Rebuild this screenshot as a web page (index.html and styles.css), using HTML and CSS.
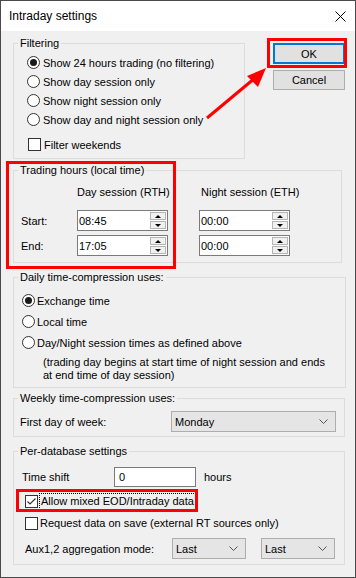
FILE: index.html
```html
<!DOCTYPE html>
<html lang="en">
<head>
  <meta charset="UTF-8">
  <meta name="viewport" content="width=device-width, initial-scale=1.0">
  <title>Intraday settings</title>
  <link rel="stylesheet" href="styles.css">
</head>
<body>
  <div class="window">

    <!-- Title bar -->
    <div class="titlebar">
      <span class="title">Intraday settings</span>
      <svg class="close" width="11" height="11" viewBox="0 0 11 11">
        <path d="M0.5 0.5L10.5 10.5M10.5 0.5L0.5 10.5" stroke="#000" stroke-width="1" fill="none"/>
      </svg>
    </div>

    <div class="dialog">

      <!-- Filtering + buttons -->
      <div class="top-row">
        <fieldset class="group filtering">
          <legend>Filtering</legend>
          <div class="group-body">
            <div class="opt"><span class="radio on"></span>Show 24 hours trading (no filtering)</div>
            <div class="opt"><span class="radio"></span>Show day session only</div>
            <div class="opt"><span class="radio"></span>Show night session only</div>
            <div class="opt"><span class="radio"></span>Show day and night session only</div>
            <div class="opt weekends"><span class="check"></span>Filter weekends</div>
          </div>
        </fieldset>
        <div class="buttons">
          <button class="btn default">OK</button>
          <button class="btn">Cancel</button>
        </div>
      </div>

      <!-- Trading hours -->
      <fieldset class="group trading">
        <legend>Trading hours (local time)</legend>
        <div class="hours-grid">
          <span></span>
          <span class="col-head">Day session (RTH)</span>
          <span class="col-head night-head">Night session (ETH)</span>

          <span class="row-label">Start:</span>
          <div class="spin"><span class="spin-value">08:45</span><span class="spin-btns"><i class="up"></i><i class="down"></i></span></div>
          <div class="spin"><span class="spin-value">00:00</span><span class="spin-btns"><i class="up"></i><i class="down"></i></span></div>

          <span class="row-label">End:</span>
          <div class="spin"><span class="spin-value">17:05</span><span class="spin-btns"><i class="up"></i><i class="down"></i></span></div>
          <div class="spin"><span class="spin-value">00:00</span><span class="spin-btns"><i class="up"></i><i class="down"></i></span></div>
        </div>
      </fieldset>

      <!-- Daily compression -->
      <fieldset class="group daily">
        <legend>Daily time-compression uses:</legend>
        <div class="group-body">
          <div class="opt tall"><span class="radio on"></span>Exchange time</div>
          <div class="opt tall"><span class="radio"></span>Local time</div>
          <div class="opt tall"><span class="radio"></span>Day/Night session times as defined above</div>
          <p class="note">(trading day begins at start time of night session and ends<br>at end time of day session)</p>
        </div>
      </fieldset>

      <!-- Weekly compression -->
      <fieldset class="group weekly">
        <legend>Weekly time-compression uses:</legend>
        <div class="group-body row">
          <span>First day of week:</span>
          <div class="combo wide">Monday<svg class="chev" width="9" height="5" viewBox="0 0 9 5"><path d="M0.5 0.5L4.5 4.5L8.5 0.5" stroke="#555" fill="none"/></svg></div>
        </div>
      </fieldset>

      <!-- Per-database -->
      <fieldset class="group perdb">
        <legend>Per-database settings</legend>
        <div class="group-body">
          <div class="row shift">
            <span class="shift-label">Time shift</span>
            <div class="edit">0</div>
            <span class="unit">hours</span>
          </div>
          <div class="opt chk mixed"><span class="check on"><svg width="11" height="11" viewBox="0 0 11 11"><path d="M1.5 5.5L4 8L9.5 2.5" stroke="#333" stroke-width="1.2" fill="none"/></svg></span><span class="focus">Allow mixed EOD/Intraday data</span></div>
          <div class="opt chk"><span class="check"></span>Request data on save (external RT sources only)</div>
          <div class="row aux">
            <span class="aux-label">Aux1,2 aggregation mode:</span>
            <div class="combo small">Last<svg class="chev" width="9" height="5" viewBox="0 0 9 5"><path d="M0.5 0.5L4.5 4.5L8.5 0.5" stroke="#555" fill="none"/></svg></div>
            <div class="combo small">Last<svg class="chev" width="9" height="5" viewBox="0 0 9 5"><path d="M0.5 0.5L4.5 4.5L8.5 0.5" stroke="#555" fill="none"/></svg></div>
          </div>
        </div>
      </fieldset>
    </div>

    <!-- Red annotations drawn over the dialog -->
    <div class="mark mark-ok"></div>
    <div class="mark mark-hours"></div>
    <div class="mark mark-mixed"></div>
    <svg class="arrow" width="354" height="576" viewBox="0 0 354 576">
      <path d="M206 117L254 77" stroke="#f00" stroke-width="3" fill="none"/>
      <path d="M265 67L246 75L257 86Z" fill="#f00"/>
    </svg>
  </div>
</body>
</html>
```

FILE: styles.css
```css
/* Basic styling */
* {
  box-sizing: border-box;
}
body {
  margin: 0;
  background: #ffffff;
  font-family: "Liberation Sans", Arial, sans-serif;
  font-size: 11px;
  color: #000000;
}
.window {
  position: relative;
  width: 356px;
  height: 578px;
  border: 1px solid #4a4a4a;
  background: #f0f0f0;
}

/* Title bar */
.titlebar {
  height: 30px;
  background: #ffffff;
  display: flex;
  align-items: center;
  justify-content: space-between;
  padding: 0 9px 0 8px;
  font-size: 12px;
}

.dialog {
  padding: 5px 0 0 12px;
}

/* Group boxes */
.group {
  margin: 0;
  padding: 0;
  border: 1px solid #dcdcdc;
  min-width: 0;
}
.group legend {
  padding: 0 2px;
  margin-left: 4px;
  line-height: 14px;
}
.group-body.row,
.row {
  display: flex;
  align-items: center;
}

/* Options */
.opt {
  display: flex;
  align-items: center;
  height: 19px;
  white-space: nowrap;
}
.radio {
  width: 13px;
  height: 13px;
  border: 1px solid #333333;
  border-radius: 50%;
  background: #ffffff;
  margin-right: 3px;
  display: flex;
  align-items: center;
  justify-content: center;
  flex: none;
}
.radio.on::after {
  content: "";
  width: 7px;
  height: 7px;
  border-radius: 50%;
  background: #1a1a1a;
}
.check {
  width: 13px;
  height: 13px;
  border: 1px solid #333333;
  background: #ffffff;
  margin-right: 3px;
  display: flex;
  align-items: center;
  justify-content: center;
  flex: none;
}

/* Filtering */
.top-row {
  display: flex;
  align-items: flex-start;
}
.filtering {
  width: 232px;
}
.filtering .group-body {
  padding: 3px 0 4px 13px;
}
.filtering .weekends {
  margin-top: 6px;
  padding-left: 1px;
}
.buttons {
  margin-left: 28px;
  padding-top: 7px;
  display: flex;
  flex-direction: column;
  gap: 6px;
}
.btn {
  width: 72px;
  height: 20px;
  padding: 0;
  font-family: inherit;
  font-size: 11px;
  background: #e1e1e1;
  border: 1px solid #adadad;
  color: #000000;
}
.btn.default {
  height: 21px;
  border: 2px solid #0078d7;
}

/* Trading hours */
.trading {
  margin-top: 4px;
  width: 329px;
}
.hours-grid {
  display: grid;
  grid-template-columns: 56px 122px 90px;
  row-gap: 4px;
  padding: 8px 0 6px 7px;
  align-items: center;
}
.col-head {
  line-height: 14px;
  margin-bottom: 7px;
  white-space: nowrap;
}
.night-head {
  padding-left: 2px;
}
.spin {
  width: 91px;
  height: 21px;
  background: #ffffff;
  border: 1px solid #7a7a7a;
  display: flex;
  align-items: center;
  justify-content: space-between;
  padding: 0 1px 0 1px;
}
.spin-btns {
  display: flex;
  flex-direction: column;
  gap: 1px;
  width: 16px;
}
.spin-btns i {
  height: 8px;
  background: #f0f0f0;
  border: 1px solid #b5b5b5;
  display: flex;
  align-items: center;
  justify-content: center;
}
.spin-btns i::after {
  content: "";
  border-left: 3px solid transparent;
  border-right: 3px solid transparent;
}
.spin-btns .up::after {
  border-bottom: 3px solid #000000;
}
.spin-btns .down::after {
  border-top: 3px solid #000000;
}

/* Daily */
.daily {
  margin-top: 7px;
  width: 333px;
}
.daily .group-body {
  padding: 6px 0 5px 8px;
}
.opt.tall {
  height: 21px;
}
.opt.tall .radio {
  margin-right: 2px;
}
.note {
  margin: 3px 0 0 21px;
  line-height: 13px;
}

/* Weekly */
.weekly {
  margin-top: 3px;
  width: 332px;
}
.weekly .group-body {
  padding: 6px 8px 4px 6px;
  justify-content: space-between;
}
.combo {
  height: 21px;
  background: #e5e5e5;
  border: 1px solid #adadad;
  display: flex;
  align-items: center;
  justify-content: space-between;
  padding: 0 7px 0 3px;
}
.combo.wide {
  width: 165px;
}
.combo.small {
  width: 74px;
}

/* Per-database */
.perdb {
  margin-top: 7px;
  width: 332px;
}
.perdb .group-body {
  padding: 9px 0 5px 8px;
}
.shift-label {
  width: 92px;
}
.edit {
  width: 82px;
  height: 20px;
  background: #ffffff;
  border: 1px solid #7a7a7a;
  padding: 3px 4px 0;
}
.unit {
  margin-left: 8px;
}
.opt.chk {
  height: 20px;
  padding-left: 3px;
}
.opt.chk .check {
  margin-right: 2px;
}
.mixed {
  margin-top: 4px;
}
.focus {
  outline: 1px dotted #000000;
  padding: 0 1px;
  line-height: 15px;
}
.opt.chk + .opt.chk {
  margin-top: 2px;
}
.aux {
  margin-top: 5px;
  padding-left: 3px;
}
.aux-label {
  width: 147px;
}
.aux .combo + .combo {
  margin-left: 15px;
}

/* Annotations */
.mark {
  position: absolute;
  border: 3px solid #f00;
}
.mark-ok {
  left: 266px;
  top: 37px;
  width: 80px;
  height: 30px;
}
.mark-hours {
  left: 5px;
  top: 160px;
  width: 170px;
  height: 108px;
}
.mark-mixed {
  left: 15px;
  top: 488px;
  width: 182px;
  height: 23px;
}
.arrow {
  position: absolute;
  left: 0;
  top: 0;
  pointer-events: none;
}
```
